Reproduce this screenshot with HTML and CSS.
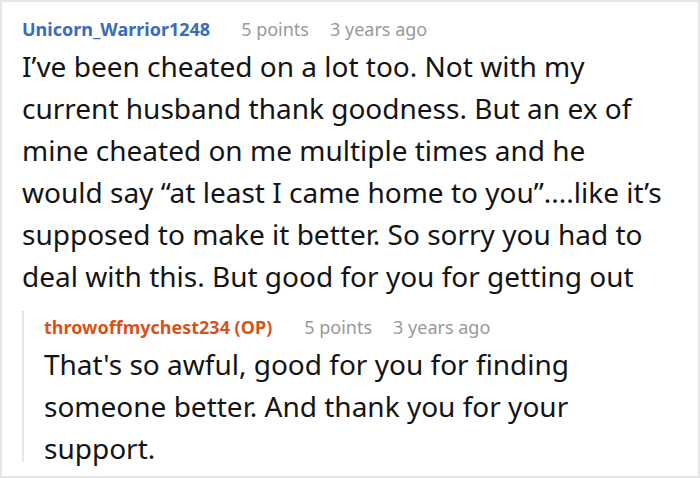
FILE: index.html
```html
<!DOCTYPE html>
<html>
<head>
<meta charset="utf-8">
<link rel="stylesheet" href="styles.css">
</head>
<body>
<div class="frame">
  <div class="comment">
    <div class="meta">
      <span class="user">Unicorn_Warrior1248</span>
      <span class="info">5 points</span>
      <span class="info">3 years ago</span>
    </div>
    <p class="body">I’ve been cheated on a lot too. Not with my current husband thank goodness. But an ex of mine cheated on me multiple times and he would say “at least I came home to you”....like it’s supposed to make it better. So sorry you had to deal with this. But good for you for getting out</p>
    <div class="reply">
      <div class="meta">
        <span class="user op">throwoffmychest234 (OP)</span>
        <span class="info">5 points</span>
        <span class="info">3 years ago</span>
      </div>
      <p class="body">That's so awful, good for you for finding someone better. And thank you for your support.</p>
    </div>
  </div>
</div>
</body>
</html>
```
FILE: styles.css
```css
html, body { margin: 0; padding: 0; background: #fff; }
.frame {
  width: 700px;
  height: 478px;
  box-sizing: border-box;
  border: 2px solid #e6e6e6;
  font-family: "Noto Sans", "Open Sans", sans-serif;
  overflow: hidden;
}
.comment { padding: 15px 20px 0 20px; }
.meta { display: flex; align-items: baseline; font-size: 18px; line-height: 24px; }
.user { font-weight: bold; color: #3a6bb8; margin-right: 31px; }
.user.op { color: #d8531c; margin-right: 32px; }
.info { color: #999; margin-right: 21px; }
.body { margin: 4px 0 0 0; font-size: 28px; line-height: 42px; color: #141414; width: 640px; }
.reply { display: flow-root; margin-top: 14px; border-left: 2px solid #e6e6e6; padding-left: 20px; padding-top: 4px; }
.reply .body { width: 560px; margin-bottom: -7px; }
```
